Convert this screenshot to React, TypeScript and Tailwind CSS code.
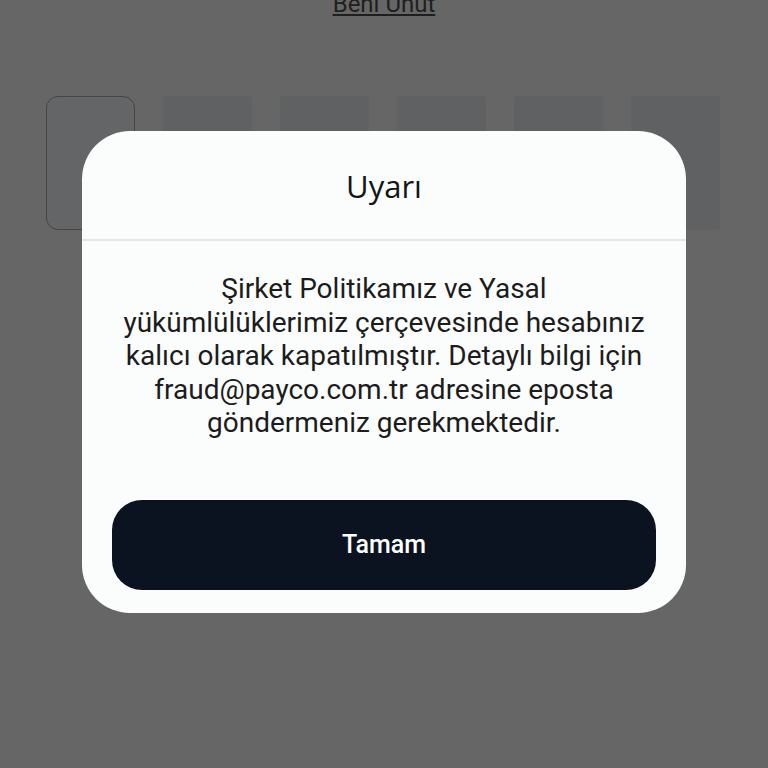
export default function App() {
	const boxes = [0, 1, 2, 3, 4, 5];

	return (
		<div
			className="relative w-[768px] h-[768px] overflow-hidden bg-[#666666]"
			style={{ fontFamily: "Roboto, 'Liberation Sans', sans-serif" }}
		>
			{/* page behind the overlay */}
			<div className="flex flex-col items-center">
				<a className="mt-[-10px] text-[24px] leading-[28px] text-[#1f1f1f] underline underline-offset-2">
					Beni Unut
				</a>
				<div className="mt-[78px] flex gap-[28px] pl-[46px] self-start">
					{boxes.map((b) => (
						<div
							key={b}
							className={
								b === 0
									? "w-[89px] h-[134px] rounded-[12px] border border-[#454545] bg-[#646566]"
									: "w-[89px] h-[134px] rounded-[4px] bg-[#606163]"
							}
						/>
					))}
				</div>
			</div>

			{/* dialog */}
			<div className="absolute left-[82px] top-[131px] w-[604px] h-[482px] rounded-[48px] bg-[#fbfcfc] flex flex-col">
				<div className="h-[110px] flex items-center justify-center border-b-2 border-[#e4e6e7]">
					<h2
						className="text-[31px] text-[#151515] mt-[2px]"
						style={{ fontFamily: "'Open Sans', 'Noto Sans', sans-serif" }}
					>
						Uyarı
					</h2>
				</div>
				<p className="mt-[31px] px-[20px] text-center text-[28px] leading-[33.5px] text-[#1c1c1c]">
					Şirket Politikamız ve Yasal
					<br />
					yükümlülüklerimiz çerçevesinde hesabınız
					<br />
					kalıcı olarak kapatılmıştır. Detaylı bilgi için
					<br />
					fraud@payco.com.tr adresine eposta
					<br />
					göndermeniz gerekmektedir.
				</p>
				<div className="mt-auto mb-[23px] px-[30px]">
					<button className="w-full h-[90px] rounded-[30px] bg-[#0b1220] text-white text-[25px] font-medium">
						Tamam
					</button>
				</div>
			</div>
		</div>
	);
}
